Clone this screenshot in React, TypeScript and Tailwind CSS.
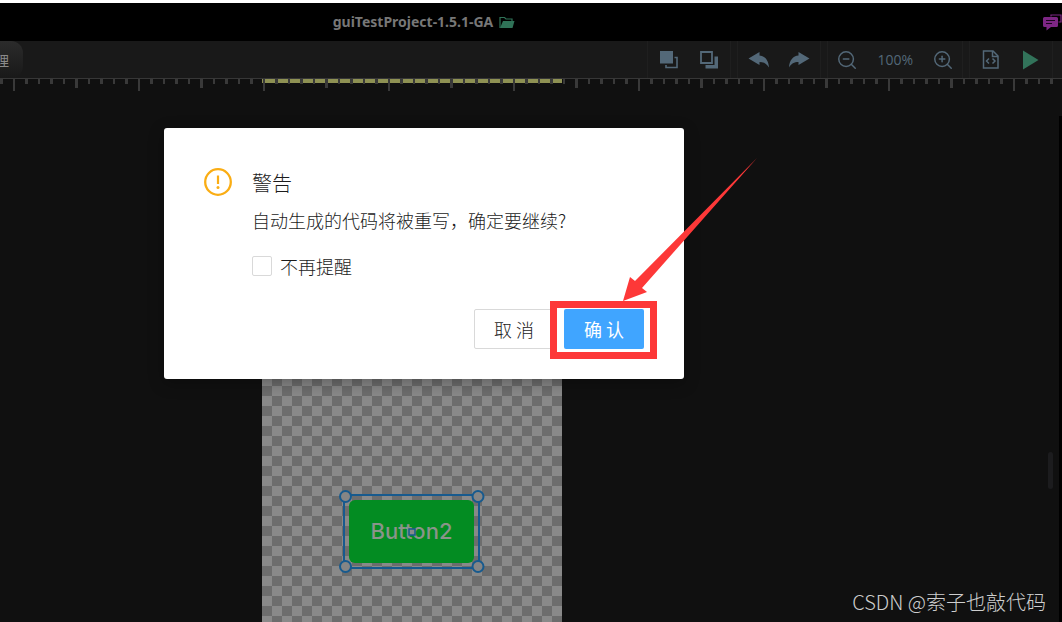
import type { ReactNode } from "react";
import { clsx } from "clsx";
import { ZoomIn, ZoomOut } from "lucide-react";

const TICK_COUNT = 85;
const TICK_STEP = 12.5;

const TitleBar = () => (
  <header className="flex h-[38px] items-center bg-black">
    <div className="flex flex-1 items-center justify-center gap-1.5 pr-[195px]">
      <h1 className="font-['Noto_Sans',sans-serif] text-sm font-bold text-[#777777]">guiTestProject-1.5.1-GA</h1>
      <button type="button" aria-label="Open folder">
        <svg width="16" height="13" viewBox="0 0 16 13" fill="none">
          <path d="M1 12V1.5H5.5L7 3H13V5.5" stroke="#2f7257" strokeWidth="1.2" />
          <path d="M1 12L4 5H15.5L13.5 12Z" fill="#2f7257" />
        </svg>
      </button>
    </div>
    <button type="button" aria-label="Messages">
      <svg width="19" height="17" viewBox="0 0 19 17" fill="none">
        <path d="M8 2.5V1H18V8H15.5" stroke="#7d2684" strokeWidth="1.2" />
        <path d="M1.5 3H13.5Q15 3 15 4.5V11.5Q15 13 13.5 13H8L3.5 16.5V13H1.5Q0 13 0 11.5V4.5Q0 3 1.5 3Z" fill="#7d2684" />
        <path d="M3 6.5H12M3 9.5H9" stroke="#1a051c" strokeWidth="1.1" />
      </svg>
    </button>
  </header>
);

const ToolGroup = ({ wide = false, children }: { wide?: boolean; children: ReactNode }) => (
  <div className={clsx("flex items-center border-x border-[#1f1f1f]", wide ? "gap-[19px] px-2" : "gap-[22px] px-3")}>
    {children}
  </div>
);

const Toolbar = () => (
  <nav className="flex h-[38px] justify-between border-b border-[#373737] bg-[#191919] pr-[9px]">
    <button
      type="button"
      className="flex w-[23px] items-center justify-end overflow-hidden rounded-r-xl bg-linear-to-b from-[#2b2b2b] to-[#191919] pr-3.5 font-['Noto_Sans_CJK_SC',sans-serif] text-sm text-[#8a8a8a]"
    >
      理
    </button>
    <div className="flex gap-1.5 text-[#536878]">
      <ToolGroup>
        <button type="button" aria-label="Bring to front">
          <svg width="18" height="18" viewBox="0 0 18 18" fill="none">
            <path d="M0 0H13V12.5H0Z" fill="currentColor" />
            <path d="M14.5 6.5H17V16.5H6V14" stroke="currentColor" strokeWidth="1.6" />
          </svg>
        </button>
        <button type="button" aria-label="Send to back">
          <svg width="18" height="18" viewBox="0 0 18 18" fill="none">
            <path d="M1 1H12V12H1Z" stroke="currentColor" strokeWidth="1.8" />
            <path d="M14.5 5.5H18V17.5H5.5V14H14.5Z" fill="currentColor" />
          </svg>
        </button>
      </ToolGroup>
      <ToolGroup>
        <button type="button" aria-label="Undo" className="-mx-0.5">
          <svg width="22" height="18" viewBox="0 0 22 18" fill="currentColor">
            <path d="M0.5 7.5L11.5 1V4.5C17 5 20.5 9 21 16.5C18.5 12.5 16 11 11.5 11V14Z" />
          </svg>
        </button>
        <button type="button" aria-label="Redo" className="-mx-0.5">
          <svg width="22" height="18" viewBox="0 0 22 18" fill="currentColor">
            <path d="M21.5 7.5L10.5 1V4.5C5 5 1.5 9 1 16.5C3.5 12.5 6 11 10.5 11V14Z" />
          </svg>
        </button>
      </ToolGroup>
      <ToolGroup wide>
        <button type="button" aria-label="Zoom out">
          <ZoomOut size={22} strokeWidth={1.6} />
        </button>
        <span className="font-['Open_Sans',sans-serif] text-sm">100%</span>
        <button type="button" aria-label="Zoom in">
          <ZoomIn size={22} strokeWidth={1.6} />
        </button>
      </ToolGroup>
      <ToolGroup>
        <button type="button" aria-label="View code">
          <svg width="18" height="19" viewBox="0 0 18 19" fill="none" stroke="currentColor" strokeWidth="1.5">
            <path d="M1.5 1H11L16 6V18H1.5Z" />
            <path d="M10.5 1V6.5H16" />
            <path d="M7 8.5L4.5 11L7 13.5M10.5 8.5L13 11L10.5 13.5" />
          </svg>
        </button>
        <button type="button" aria-label="Run">
          <svg width="18" height="20" viewBox="0 0 18 20">
            <path d="M1 0.5L16.5 10L1 19.5Z" fill="#32735a" />
          </svg>
        </button>
      </ToolGroup>
    </div>
  </nav>
);

const Ruler = () => (
  <svg className="h-3.5 w-full shrink-0" shapeRendering="crispEdges">
    <rect x="262" y="0" width="300" height="4" fill="#8e9153" />
    {Array.from({ length: TICK_COUNT }, (_, i) => {
      const k = i - 1;
      const major = k % 10 === 0;
      const mid = k % 5 === 0;
      return (
        <rect
          key={k}
          x={Math.floor(13 + k * TICK_STEP)}
          y="0"
          width={k % 2 === 0 ? 2 : 3}
          height={major ? 12 : mid ? 9 : 5}
          fill="#393939"
        />
      );
    })}
  </svg>
);

const Stage = () => (
  <main className="flex flex-1 justify-center pt-[43px] pr-[238px]">
    <div className="relative w-[300px] bg-[repeating-conic-gradient(#6d6d6d_0_25%,#898989_0_50%)] bg-size-[20px_20px]">
      <button
        type="button"
        className="absolute top-[364px] left-[87px] h-[63px] w-[125px] rounded-md bg-[#038c22] font-[Inter,sans-serif] text-[22px] font-medium text-[#8a948a]"
      >
        Button2
      </button>
      <svg className="absolute top-[352px] left-[76px]" width="148" height="86" fill="none" stroke="#175a8e" strokeWidth="2">
        <rect x="6" y="7" width="135" height="73" />
        <rect x="71" y="41" width="6" height="6" fill="#8a8a8a" strokeWidth="1.5" />
        <g fill="#858585">
          <circle cx="7.5" cy="8.5" r="5.5" />
          <circle cx="140" cy="8.5" r="5.5" />
          <circle cx="7.5" cy="78.5" r="5.5" />
          <circle cx="140" cy="78.5" r="5.5" />
        </g>
      </svg>
    </div>
  </main>
);

const WarningDialog = () => (
  <div className="absolute inset-0 flex items-start justify-center pt-[125px] pr-[214px] font-['Noto_Sans_CJK_SC',sans-serif]">
    <div
      role="dialog"
      aria-labelledby="warning-title"
      className="w-[520px] rounded-[3px] bg-white px-10 pt-10 pb-[30px] text-lg font-light text-[#1c1c1c] shadow-[0_4px_16px_rgba(0,0,0,0.3)]"
    >
      <div className="flex gap-5">
        <svg className="shrink-0" width="28" height="28" viewBox="0 0 28 28" fill="none">
          <circle cx="14" cy="14" r="12.8" stroke="#faad14" strokeWidth="2.3" />
          <path d="M14 7.5V16" stroke="#faad14" strokeWidth="2.2" />
          <circle cx="14" cy="19.5" r="1.5" fill="#faad14" />
        </svg>
        <div>
          <h2 id="warning-title" className="text-xl leading-[30px] font-light">警告</h2>
          <p className="mt-2 leading-7">自动生成的代码将被重写，确定要继续?</p>
          <label className="mt-[18px] flex items-center gap-2 leading-7">
            <input type="checkbox" className="size-5 appearance-none rounded-xs border border-[#d9d9d9] bg-white" />
            不再提醒
          </label>
        </div>
      </div>
      <div className="mt-[29px] flex justify-end gap-2.5">
        <button type="button" className="h-10 w-20 rounded-xs border border-[#d9d9d9] bg-white">取 消</button>
        <div className="relative">
          <button type="button" className="h-10 w-20 rounded-xs bg-[#40a5ff] font-normal text-white">确 认</button>
          <div className="pointer-events-none absolute -top-2 -right-[13px] -bottom-2.5 -left-3.5 border-7 border-[#fd3838]" />
          <svg className="pointer-events-none absolute bottom-12 left-[58px]" width="136" height="144" viewBox="0 0 136 144">
            <path d="M1 144L8 120L13 124L135 1L20 131L25 135Z" fill="#fd3838" />
          </svg>
        </div>
      </div>
    </div>
  </div>
);

export default function App() {
  return (
    <div className="relative flex min-h-screen flex-col overflow-hidden border-t-3 border-white bg-[#101010]">
      <TitleBar />
      <Toolbar />
      <Ruler />
      <Stage />
      <div className="absolute top-[113px] right-0 bottom-0 w-[3px] bg-black" />
      <div className="absolute top-[449px] right-[9px] h-[37px] w-[5px] rounded-full bg-[#1c1c1e]" />
      <WarningDialog />
      <p className="absolute right-4 bottom-1.5 font-['Noto_Sans_CJK_SC',sans-serif] text-xl font-light text-[#cecece]">
        CSDN @索子也敲代码
      </p>
    </div>
  );
}
